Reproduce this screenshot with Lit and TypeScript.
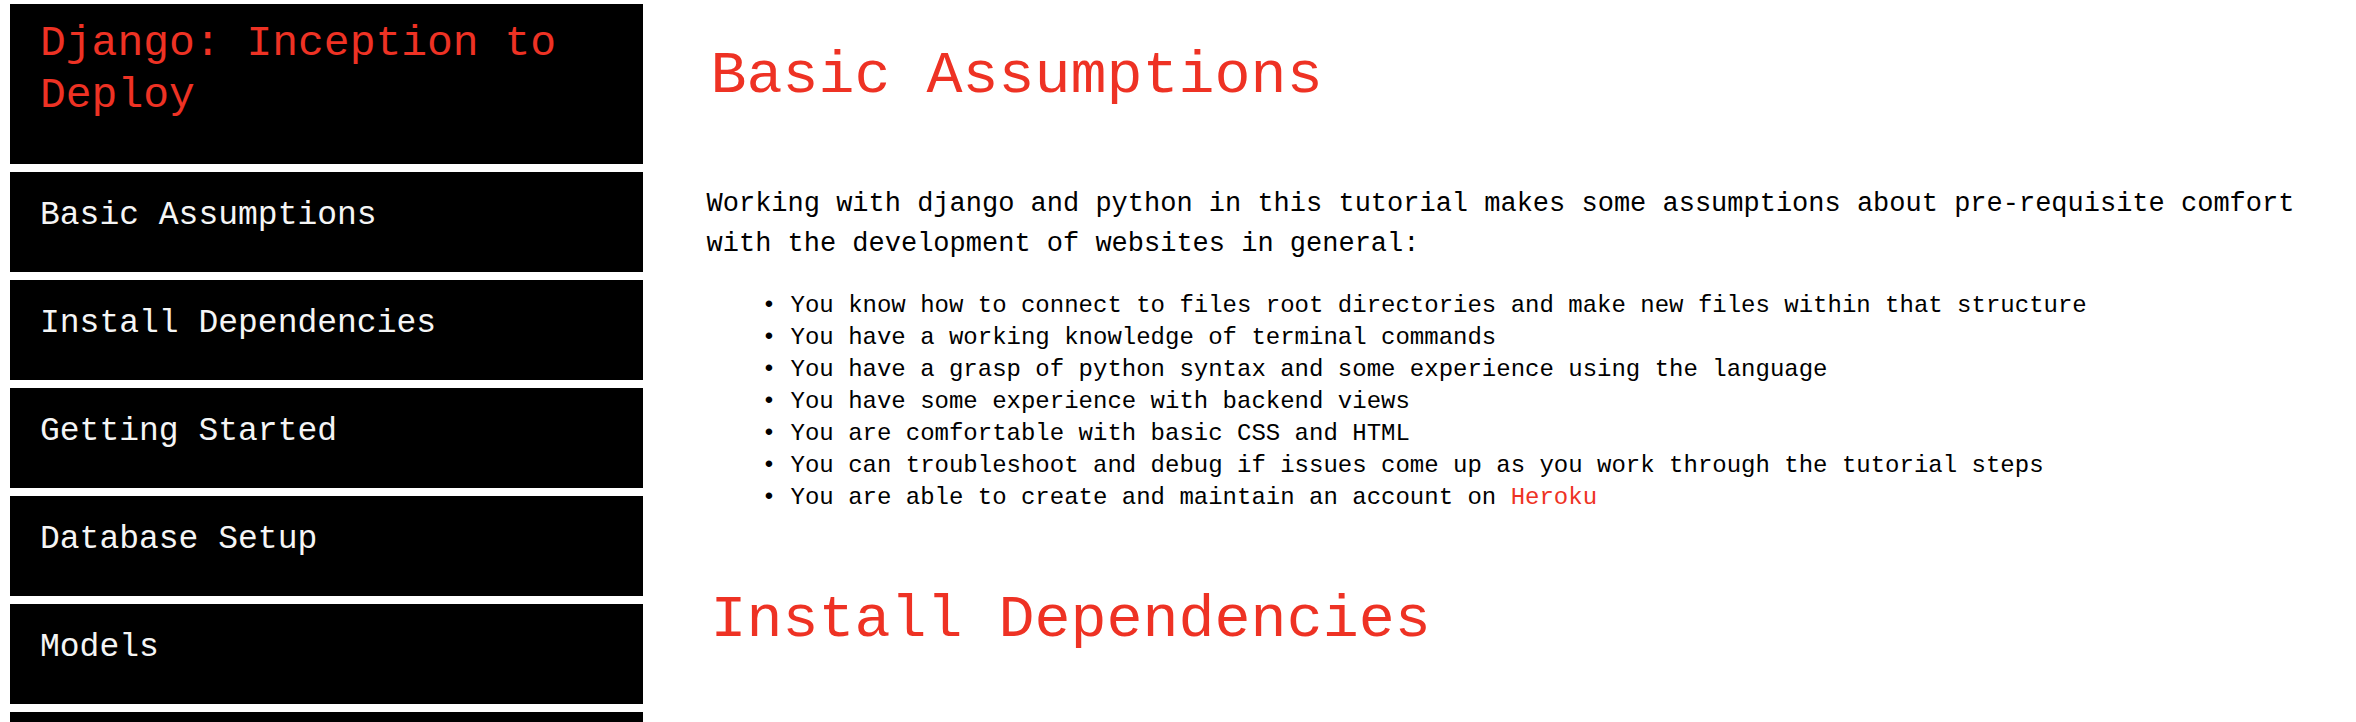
import { LitElement, html, css } from "lit";
import { customElement } from "lit/decorators.js";

const sections = [
  "Basic Assumptions",
  "Install Dependencies",
  "Getting Started",
  "Database Setup",
  "Models",
];

const assumptions = [
  "You know how to connect to files root directories and make new files within that structure",
  "You have a working knowledge of terminal commands",
  "You have a grasp of python syntax and some experience using the language",
  "You have some experience with backend views",
  "You are comfortable with basic CSS and HTML",
  "You can troubleshoot and debug if issues come up as you work through the tutorial steps",
];

const slug = (name: string) => name.replace(/\s+/g, "_");

@customElement("app-root")
export class AppRoot extends LitElement {
  static styles = css`
    :host {
      display: block;
      background: #fff;
      color: #000;
      font-family: "Nanum Gothic Coding", "Liberation Mono", monospace;
    }
    .page {
      display: grid;
      grid-template-columns: 3fr 8fr;
      min-height: 100vh;
    }
    .sidebar {
      display: flex;
      flex-direction: column;
      gap: 8px;
      padding: 4px 0 0 10px;
    }
    .title {
      margin: 0;
      padding: 14px 30px 42px;
      background: #000;
      color: #ee3224;
      font-size: 43px;
      line-height: 52px;
      font-weight: 400;
    }
    .nav-link {
      display: block;
      padding: 22px 30px 34px;
      background: #000;
      color: #f5f5f5;
      font-size: 33px;
      line-height: 44px;
      text-decoration: none;
    }
    .nav-rest {
      flex: 1;
      background: #000;
    }
    .content {
      padding: 0 16px 0 64px;
    }
    .section {
      padding-top: 40px;
    }
    .heading {
      margin: 0 0 72px;
      padding-left: 4px;
      color: #ee3224;
      font-size: 60px;
      line-height: 72px;
      font-weight: 400;
    }
    .section:last-child .heading {
      margin-bottom: 0;
    }
    .intro {
      margin: 0;
      font-size: 27px;
      line-height: 40px;
    }
    .list {
      margin: 26px 0 30px;
      padding-left: 84px;
      list-style-type: "• ";
      font-family: "Liberation Mono", monospace;
      font-size: 24px;
      line-height: 32px;
    }
    .link {
      color: #ee3224;
      text-decoration: none;
    }
  `;

  render() {
    return html`
      <div class="page">
        <nav class="sidebar">
          <h1 class="title">Django: Inception to Deploy</h1>
          ${sections.map((s) => html`<a class="nav-link" href="#${slug(s)}">${s}</a>`)}
          <div class="nav-rest"></div>
        </nav>
        <main class="content">
          <section class="section" id="Basic_Assumptions">
            <h2 class="heading">Basic Assumptions</h2>
            <p class="intro">
              Working with django and python in this tutorial makes some assumptions about
              pre-requisite comfort with the development of websites in general:
            </p>
            <ul class="list">
              ${assumptions.map((a) => html`<li>${a}</li>`)}
              <li>
                You are able to create and maintain an account on
                <a class="link" href="https://www.heroku.com">Heroku</a>
              </li>
            </ul>
          </section>
          <section class="section" id="Install_Dependencies">
            <h2 class="heading">Install Dependencies</h2>
          </section>
        </main>
      </div>
    `;
  }
}
